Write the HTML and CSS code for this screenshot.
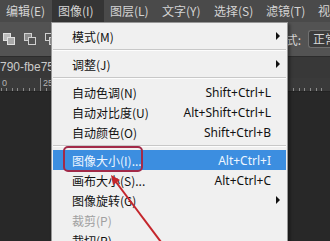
FILE: index.html
```html
<!DOCTYPE html>
<html>
<head>
<meta charset="utf-8">
<link rel="stylesheet" href="styles.css">
</head>
<body>
<div class="app">
    <div class="menubar">
        <span class="menubar-item">编辑(E)</span>
        <span class="menubar-item active">图像(I)</span>
        <span class="menubar-item">图层(L)</span>
        <span class="menubar-item">文字(Y)</span>
        <span class="menubar-item">选择(S)</span>
        <span class="menubar-item">滤镜(T)</span>
        <span class="menubar-item">视图(V)</span>
    </div>
    <div class="options">
        <svg class="opt-icon" viewBox="0 0 12 12">
            <rect x="0.5" y="0.5" width="7" height="7" fill="#bcbcbc" stroke="#e0e0e0"/>
            <rect x="4.5" y="4.5" width="7" height="7" fill="#a8a8a8" stroke="#e0e0e0"/>
        </svg>
        <svg class="opt-icon" viewBox="0 0 12 12">
            <rect x="0.5" y="0.5" width="7" height="7" fill="#8c8c8c" stroke="#d0d0d0"/>
            <rect x="4.5" y="4.5" width="7" height="7" fill="#535353" stroke="#d0d0d0"/>
        </svg>
        <svg class="opt-icon" viewBox="0 0 12 12">
            <rect x="0.5" y="0.5" width="7" height="7" fill="none" stroke="#d0d0d0"/>
            <rect x="4.5" y="4.5" width="7" height="7" fill="#8c8c8c" stroke="#d0d0d0"/>
        </svg>
        <div class="opt-right">
            <span class="opt-label">式:</span>
            <span class="opt-select">正常</span>
        </div>
    </div>
    <div class="doctab"><span class="doc-name">790-fbe75</span></div>
    <div class="ruler">
        <span class="ruler-seg first">0</span>
        <span class="ruler-seg">25</span>
        <span class="ruler-seg"></span>
        <span class="ruler-seg"></span>
        <span class="ruler-seg"></span>
        <span class="ruler-seg"></span>
        <span class="ruler-seg">5</span>
    </div>
    <div class="canvas"></div>
</div>

<!-- the open 图像 menu -->
<div class="menu">
    <div class="menu-row"><span class="menu-label">模式(M)</span><span class="menu-sub"></span></div>
    <div class="menu-sep"></div>
    <div class="menu-row"><span class="menu-label">调整(J)</span><span class="menu-sub"></span></div>
    <div class="menu-sep"></div>
    <div class="menu-row"><span class="menu-label">自动色调(N)</span><span class="menu-key">Shift+Ctrl+L</span></div>
    <div class="menu-row"><span class="menu-label">自动对比度(U)</span><span class="menu-key">Alt+Shift+Ctrl+L</span></div>
    <div class="menu-row"><span class="menu-label">自动颜色(O)</span><span class="menu-key">Shift+Ctrl+B</span></div>
    <div class="menu-sep"></div>
    <div class="menu-row active">
        <span class="menu-label">图像大小(I)...</span><span class="menu-key">Alt+Ctrl+I</span>
        <span class="mark-box"></span>
    </div>
    <div class="menu-row"><span class="menu-label">画布大小(S)...</span><span class="menu-key">Alt+Ctrl+C</span></div>
    <div class="menu-row"><span class="menu-label">图像旋转(G)</span><span class="menu-sub"></span></div>
    <div class="menu-row disabled"><span class="menu-label">裁剪(P)</span></div>
    <div class="menu-row"><span class="menu-label">裁切(R)...</span></div>
</div>

<svg class="mark-arrow" width="330" height="241" viewBox="0 0 330 241">
    <line x1="161" y1="242" x2="116" y2="182" stroke="#c4262c" stroke-width="2"/>
    <polygon points="111,175 120,180 113,185" fill="#c4262c"/>
</svg>
</body>
</html>
```

FILE: styles.css
```css
* {
	box-sizing: border-box;
}
html, body {
	margin: 0;
	padding: 0;
}
body {
	position: relative;
	width: 330px;
	height: 241px;
	overflow: hidden;
	background: #282828;
	font: 12px "Noto Sans CJK SC", "Noto Sans", sans-serif;
}
.app {
	display: flex;
	flex-direction: column;
	height: 241px;
}

/* top menu bar */
.menubar {
	display: flex;
	height: 22px;
	background: #4a4a4a;
	color: #d4d4d4;
}
.menubar-item {
	flex: 0 0 52px;
	padding-left: 6px;
	line-height: 22px;
	white-space: nowrap;
}
.menubar-item.active {
	background: #353535;
}

/* options bar */
.options {
	display: flex;
	align-items: center;
	gap: 9px;
	height: 35px;
	padding-left: 3px;
	background: #535353;
	border-bottom: 1px solid #2c2c2c;
}
.opt-icon {
	width: 12px;
	height: 12px;
}
.opt-right {
	display: flex;
	align-items: center;
	gap: 7px;
	margin-left: auto;
	color: #d8d8d8;
}
.opt-select {
	width: 22px;
	height: 18px;
	padding-left: 4px;
	overflow: hidden;
	white-space: nowrap;
	line-height: 16px;
	background: #3c3c3c;
	border: 1px solid #707070;
	border-right: 0;
	border-radius: 3px 0 0 3px;
}

/* document tab + ruler */
.doctab {
	height: 21px;
	background: #383838;
	color: #cacaca;
	font: 12px "Liberation Sans", sans-serif;
	line-height: 21px;
	white-space: nowrap;
	overflow: hidden;
}
.ruler {
	display: flex;
	height: 14px;
	background-color: #3a3a3a;
	background-image: repeating-linear-gradient(90deg, #8a8a8a 0 1px, transparent 1px 5.625px);
	background-size: 100% 3px;
	background-position: -5px bottom;
	background-repeat: no-repeat;
	border-bottom: 1px solid #222;
}
.ruler-seg {
	flex: 0 0 45px;
	padding-left: 2px;
	border-left: 1px solid #8a8a8a;
	color: #b4b4b4;
	font: 9px "Liberation Sans", sans-serif;
	line-height: 10px;
}
.ruler-seg.first {
	flex-basis: 40px;
	border-left: 0;
}
.canvas {
	flex: 1;
	background: #282828;
}

/* dropdown menu */
.menu {
	position: absolute;
	left: 51px;
	top: 22px;
	width: 237px;
	height: 240px;
	padding: 3px 1px;
	background: #f0f0f0;
	border: 1px solid #979797;
	box-shadow: 2px 2px 3px rgba(0,0,0,0.4);
}
.menu-row {
	position: relative;
	display: flex;
	align-items: center;
	height: 20px;
	padding: 0 15px 0 19px;
	color: #111;
	white-space: nowrap;
}
.menu-label {
	flex: 1;
}
.menu-key {
	font: 12px "Noto Sans", sans-serif;
}
.menu-sub {
	width: 0;
	height: 0;
	margin-right: -9px;
	border-left: 4px solid #111;
	border-top: 4px solid transparent;
	border-bottom: 4px solid transparent;
}
.menu-sep {
	height: 8px;
	padding-top: 3px;
}
.menu-sep:after {
	content: "";
	display: block;
	border-top: 1px solid #c8c8c8;
	border-bottom: 1px solid #fdfdfd;
}
.menu-row.active {
	background: #3c8ee0;
	color: #eef6ff;
}
.menu-row.disabled {
	color: #a0a0a0;
}

/* red annotation */
.mark-box {
	position: absolute;
	left: 10px;
	top: -4px;
	width: 80px;
	height: 26px;
	border: 2px solid #a22a48;
	border-radius: 5px;
}
.mark-arrow {
	position: absolute;
	left: 0;
	top: 0;
}
```
